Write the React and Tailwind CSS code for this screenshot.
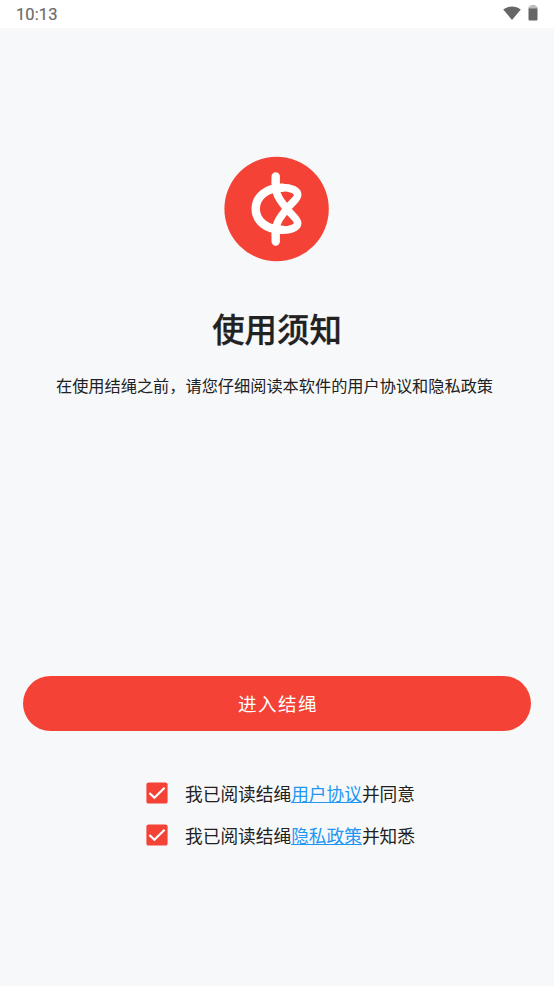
function Logo() {
  return (
    <svg viewBox="0 0 120 120" className="size-[120px]" fill="none" stroke="#fff" strokeLinecap="round" strokeLinejoin="round">
      <circle cx="60.6" cy="59" r="52.2" fill="#f44336" stroke="none" />
      <path d="M66 37.800C50.500 37.800 39.700 46.600 39.700 58.800C39.700 71 50.500 79.800 66 79.800" strokeWidth="8.4" />
      <path d="M59.700 26.500V33M59.700 85V91.500" strokeWidth="8.4" />
      <path
        d="M59.500 33V37C59.500 44.500 65 51.500 70.800 58.800C75.500 64.800 81.700 69 81.700 73C81.700 77.500 75 80.100 66 80.100M66 37.500C75 37.500 81.700 40.500 81.700 45C81.700 49 75.500 52.800 70.800 58.800C65 66 59.500 73 59.500 81V85"
        strokeWidth="7.6"
      />
    </svg>
  );
}

function StatusBar() {
  return (
    <header className="flex h-7 items-center justify-between bg-white pl-4 pr-[16px] text-[#6b6b6b]">
      <span className="pt-[2px] font-[Roboto] text-[16.500px] font-normal leading-7 tracking-[0.1px] [-webkit-text-stroke:0.2px_#6b6b6b]">10:13</span>
      <div className="-mt-[2px] flex items-center gap-[7px]">
        <svg viewBox="0 0 18 16" className="h-4 w-[18px]" fill="#666">
          <path d="M.2 4.500C5.500 .5 12.500 .5 17.800 4.500L9 15Z" />
        </svg>
        <svg viewBox="0 0 10 16" className="h-4 w-[10px]">
          <path d="M2.500 0H7.500V1.500H9.500V4H.5V1.500H2.500Z" fill="#bbb" />
          <path d="M.5 3.500H9.500V14.500Q9.500 15.500 8.500 15.500H1.500Q.5 15.500 .5 14.500Z" fill="#666" />
        </svg>
      </div>
    </header>
  );
}

function Agreement({ link, suffix }) {
  return (
    <label className="flex h-[42px] items-center">
      <svg viewBox="0 0 22 22" className="mr-[17px] size-[22px]" fill="none">
        <rect x=".4" y=".4" width="21.200" height="21.200" rx="2.200" fill="#f44336" />
        <path d="M3.400 11L8.400 15.800L18.600 5.800" stroke="#fff" strokeWidth="2.200" />
      </svg>
      <span className="-mt-px whitespace-nowrap text-[17.700px] leading-6">
        我已阅读结绳<span className="text-[#2196f3] underline decoration-1 underline-offset-1">{link}</span>{suffix}
      </span>
    </label>
  );
}

export default function App() {
  return (
    <div className="flex h-[986px] w-[554px] flex-col overflow-hidden bg-[#f7f8fa] font-['Noto_Sans_CJK_SC',sans-serif] text-[#212121]">
      <StatusBar />
      <main className="flex flex-1 flex-col items-center">
        <div className="mt-[122px] flex w-full pl-[216px]">
          <Logo />
        </div>
        <h1 className="mt-[34px] text-[32.400px] font-medium leading-12 [-webkit-text-stroke:0.3px_#212121]">使用须知</h1>
        <p className="mt-[21px] w-[442px] whitespace-nowrap text-[16.200px] leading-6">
          在使用结绳之前，请您仔细阅读本软件的用户协议和隐私政策
        </p>
        <button className="mt-[278.500px] h-[55.500px] w-[508px] rounded-full bg-[#f44336] pl-[2px] pt-[2px] text-[18.500px] tracking-[1.500px] text-white">
          进入结绳
        </button>
        <div className="mt-[41px] flex w-[262px] flex-col">
          <div className="w-[269px]">
            <Agreement link="用户协议" suffix="并同意" />
            <Agreement link="隐私政策" suffix="并知悉" />
          </div>
        </div>
      </main>
    </div>
  );
}
